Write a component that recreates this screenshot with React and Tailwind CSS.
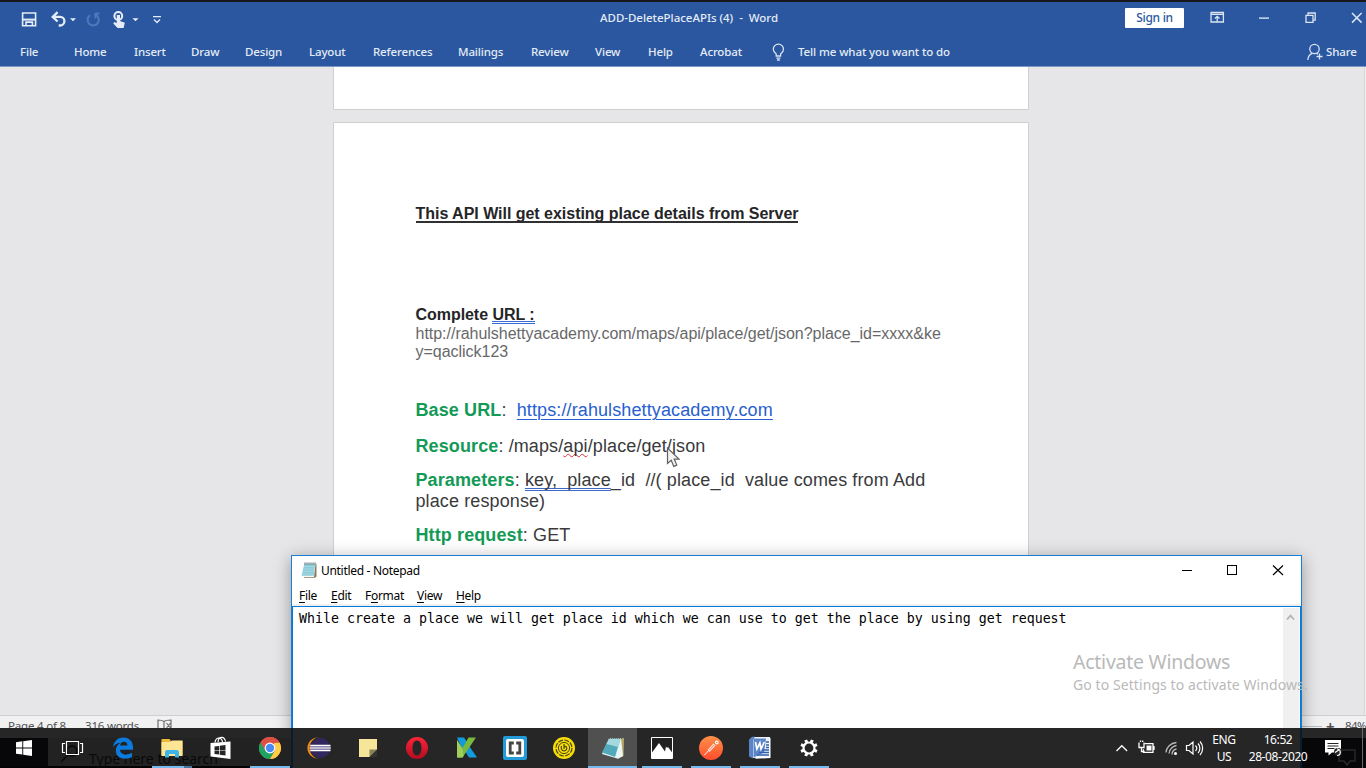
import React from "react";

const menu = [
  ["File", "w-[54px]"],
  ["Home", "w-[60px]"],
  ["Insert", "w-[57px]"],
  ["Draw", "w-[54px]"],
  ["Design", "w-[64px]"],
  ["Layout", "w-[64px]"],
  ["References", "w-[85px]"],
  ["Mailings", "w-[73px]"],
  ["Review", "w-[64px]"],
  ["View", "w-[53px]"],
  ["Help", "w-[52px]"],
  ["Acrobat", "w-[72px]"],
];

function QuickAccess() {
  return (
    <svg className="block h-[28px] w-[180px]" viewBox="0 0 180 28" fill="none">
      <g stroke="#e6edf8" strokeWidth="1.6" transform="translate(0 2.2)">
        <path d="M22.6 8.8h13v12.8h-13z" />
        <path d="M23 15.4h12.4" strokeWidth="2" />
        <path d="M26 21.5v-3.600h6.400v3.600" />
      </g>
      <path d="M52.500 14.300h7.600a4 4 0 0 1 0 8.600h-1.400M57.600 9.600l-4.900 4.700 4.900 4.600" stroke="#e6edf8" strokeWidth="2.300" transform="translate(0 0.600)" />
      <path d="M70 16.300h6l-3 3z" fill="#e6edf8" />
      <path d="M95.800 10.600a5.600 5.600 0 1 1-5.200.6M96 9v5.400M96 9.600h4" stroke="#5079bb" strokeWidth="2" transform="translate(-0.600 2)" />
      <circle cx="118.300" cy="14" r="3.900" stroke="#e6edf8" strokeWidth="2" />
      <path d="M116.800 13v8l-2.600-1-.9 1.600 4.300 4.400h6l1.200-5.200-4.800-1.800v-6z" fill="#e6edf8" />
      <path d="M132.500 16.300h6l-3 3zM153 14h8v1.300h-8z" fill="#e6edf8" />
      <path d="M154 17.500l3 3 3-3" stroke="#e6edf8" strokeWidth="1.300" />
    </svg>
  );
}

function WordHeader() {
  return (
    <header className="h-[67px] w-full border-b border-t-2 border-b-[#7d97c4] border-t-[#17181c] bg-[#2a579f] font-['Noto_Sans','Open_Sans',sans-serif] text-[12px] font-medium text-[#e4ebf6]">
      <div className="flex h-[31px] items-center">
        <div className="w-[600px] pb-[4px]">
          <QuickAccess />
        </div>
        <div className="w-[525px] whitespace-pre text-[11.5px] tracking-[-0.020px]">ADD-DeletePlaceAPIs (4)  -  Word</div>
        <div className="flex h-[20px] w-[59px] items-center justify-center rounded-[1px] bg-white text-[12px] tracking-[-0.3px] text-[#2a579f]">Sign in</div>
        <svg className="block h-[30px] w-[182px]" viewBox="1184 2 182 30" fill="none" stroke="#d9e4f4" strokeWidth="1.300">
          <path d="M1211 11.500h12.400v9.500h-12.400zM1211 13.400h12.400M1217.200 20.500v-5M1214.900 17.500l2.300-2.200 2.300 2.200" />
          <path d="M1259 17.100h10" strokeWidth="1.400" />
          <path d="M1306 14.300h7v7h-7zM1308 14v-2h7.200v7.200h-2" />
          <path d="M1352 12l9.600 9.600M1361.600 12l-9.600 9.600" strokeWidth="1.500" />
        </svg>
      </div>
      <nav className="flex h-[33px] items-center pl-5 pt-[4px] text-[11.5px] tracking-[-0.150px]">
        {menu.map(([label, w]) => (
          <span key={label} className={w + " shrink-0"}>{label}</span>
        ))}
        <svg className="block h-[18px] w-[26px] shrink-0" viewBox="0 0 26 18" fill="none" stroke="#d9e4f4" strokeWidth="1.300">
          <path d="M4.200 13v-2C2.600 9.500 1.300 8.400 1.300 6.200a5.100 5.100 0 0 1 10.200 0c0 2.200-1.300 3.300-2.900 4.800v2zM4.400 15.200h4M5 17h2.800" />
        </svg>
        <span className="w-[509px] shrink-0 tracking-[-0.100px]">Tell me what you want to do</span>
        <svg className="block h-[18px] w-[19px] shrink-0" viewBox="0 0 19 18" fill="none" stroke="#d9e4f4" strokeWidth="1.300">
          <circle cx="7.500" cy="6" r="4.700" />
          <path d="M.8 17c.2-3.600 1.800-5.600 4.400-6.600M9.800 10.200l1.200 1M12.500 10.500v6M9.500 13.500h6" />
        </svg>
        <span>Share</span>
      </nav>
    </header>
  );
}

function Green({ children }) {
  return <b className="text-[#139a56]">{children}</b>;
}

function DocPage() {
  return (
    <article className="mx-auto mt-[12px] h-[594px] w-[696px] border border-[#d0d0d2] bg-white pl-[81.5px] pt-[81px] font-['Liberation_Sans',Arial,sans-serif] text-[#3a3a3c]">
      <h1 className="h-[101px] text-[16px] font-bold leading-[20px] tracking-[-0.025px] text-[#252527]">
        <span className="inline-block h-[19px] whitespace-nowrap border-b-2 border-[#303032]">This API Will get existing place details from Server</span>
      </h1>
      <h2 className="h-[20px] text-[16px] font-bold leading-[20px] tracking-[-0.050px] text-[#252527]">
        Complete <span className="inline-block h-[19px] border-b-[3px] border-double border-[#3b6bd6]">URL :</span>
      </h2>
      <p className="whitespace-nowrap text-[16px] leading-[18px] tracking-[-0.020px] text-[#68686a]">
        http://rahulshettyacademy.com/maps/api/place/get/json?place_id=xxxx&amp;ke<br />y=qaclick123
      </p>
      <div className="mt-[39px] whitespace-pre text-[18px] leading-[21px] tracking-[0.110px]">
        <p className="h-[36px]"><Green>Base URL</Green>:  <span className="underline decoration-[#2860cf] decoration-1 underline-offset-[3px] text-[#2860cf]">https://rahulshettyacademy.com</span></p>
        <p className="h-[34px]"><Green>Resource</Green>: /maps/<span className="underline decoration-[#dc3030] decoration-wavy decoration-[1.200px] underline-offset-1 [text-decoration-skip-ink:none]">api</span>/place/get/json</p>
        <p className="h-[55px]"><Green>Parameters</Green>: <span className="underline decoration-double decoration-[#3c69c9] decoration-1 underline-offset-2 [text-decoration-skip-ink:none]">key,  place</span>_id  //( place_id  value comes from Add{"\n"}place response)</p>
        <p><Green>Http request</Green>: GET</p>
      </div>
    </article>
  );
}

function WordWindow() {
  return (
    <section className="flex h-[768px] flex-col bg-[#e6e6e8]">
      <WordHeader />
      <div className="flex h-[648px] overflow-hidden">
        <div className="w-[333px]" />
        <div className="w-[696px]">
          <div className="h-[43px] border border-t-0 border-[#d0d0d2] bg-white" />
          <DocPage />
        </div>
        <div className="flex flex-1 justify-end">
          <div className="w-[2px] border-l border-[#d8d8da] bg-[#efeff0]" />
        </div>
      </div>
      <footer className="flex h-[23px] items-start border-t border-[#cfcfd1] bg-[#f1f1f2] pl-[8px] font-['Noto_Sans','Open_Sans',sans-serif] text-[11.5px] leading-[20px] tracking-[-0.2px] text-[#505052]">
        <span className="w-[77px]">Page 4 of 8</span>
        <span className="w-[72px]">316 words</span>
        <svg className="mt-[3px] block h-[13px] w-[16px]" viewBox="0 0 16 13" fill="none" stroke="#707072" strokeWidth="1.200">
          <path d="M7 2.500C5 1 3 1 1 1v10c2 0 4 0 6 1.500zM7 2.500C9 1 11 1 14 1v10c-2 0-5 0-7 1.500M9.500 4l4 5M13.500 4l-4 5" />
        </svg>
        <div className="flex flex-1 justify-end">
          <div className="mt-[10px] h-px w-[30px] bg-[#bcbcbe]" />
          <span className="ml-1 w-[19px] text-[15px] font-bold">+</span>
          <span className="w-[21px] overflow-hidden whitespace-nowrap tracking-[-0.6px]">84%</span>
        </div>
      </footer>
      <div className="flex h-[30px] bg-black" />
    </section>
  );
}

function NotepadIcon({ className }) {
  return (
    <svg className={className} viewBox="0 0 16 16">
      <path d="M4 2h11.500v12.500L14 15.800H3z" fill="#8b7b5a" />
      <path d="M3.300 2h11.200L13 15H.7z" fill="#f4fafb" />
      <path d="M3.300 2h10.800l-1.400 11.800H.6z" fill="#8ccbd9" />
      <path d="M3 4.500h10.700M2.700 7h10.700M2 9.500h11M1.500 12h11.400" stroke="#a8dce6" strokeWidth=".8" />
      <path d="M4 .5v2M6 .5v2M8 .5v2M10 .5v2M12 .5v2M14 .5v2" stroke="#53606a" strokeWidth="1" />
    </svg>
  );
}

function Notepad() {
  const items = [["F", "ile", "", "w-[32px]"], ["E", "dit", "", "w-[34px]"], ["o", "rmat", "F", "w-[52px]"], ["V", "iew", "", "w-[39px]"], ["H", "elp", "", "w-[40px]"]];
  return (
    <section className="absolute left-[291px] top-[555px] h-[213px] w-[1011px] border border-b-0 border-[#1a7fd4] bg-white font-['Noto_Sans','Open_Sans',sans-serif] text-[12px] text-black shadow-[0_3px_16px_rgba(0,0,0,0.35)]">
      <div className="flex h-[29px] items-center pl-[9px]">
        <NotepadIcon className="-mt-[2px] block h-[16px] w-[16px]" />
        <span className="ml-[4px] flex-1 tracking-[-0.3px]">Untitled - Notepad</span>
        <svg className="block h-[29px] w-[121px]" viewBox="1180 556 121 29" fill="none" stroke="#000" shapeRendering="crispEdges">
          <path d="M1182 570.500h10M1227.500 565.500h9v9h-9z" />
          <path d="M1273 565.500l10 9.500M1283 565.500l-10 9.500" strokeWidth="1.200" shapeRendering="auto" />
        </svg>
      </div>
      <div className="flex h-[21px] items-center border-b-2 border-[#f0f0f0] pl-[7px] pt-[2px] tracking-[-0.3px]">
        {items.map(([u, rest, pre, w]) => (
          <span key={rest} className={w}>{pre}<span className="underline underline-offset-2">{u}</span>{rest}</span>
        ))}
      </div>
      <div className="flex h-[163px] border-x border-t border-[#0078d7]">
        <div className="flex-1 whitespace-pre pl-[6px] pt-[4px] font-['DejaVu_Sans_Mono',monospace] text-[13.29px] leading-[16px]">While create a place we will get place id which we can use to get the place by using get request</div>
        <div className="mr-[1px] mt-[1px] w-[16px] bg-[#f0f0f0]">
          <svg className="block h-[17px] w-[16px]" viewBox="0 0 16 17" fill="none" stroke="#b2b2b2" strokeWidth="1.800"><path d="M4 11.500l3.500-4 3.500 4" /></svg>
        </div>
      </div>
    </section>
  );
}

const icons = {
  task: (
    <svg className="h-6 w-6" viewBox="0 0 24 24" fill="none" stroke="#fff" strokeWidth="1.200">
      <path d="M5.500 5.500h12v13h-12zM4 7.500H1.500v9H4M19 7.500h2.500v9H19" />
    </svg>
  ),
  edge: (
    <svg className="h-6 w-6" viewBox="0 0 24 24">
      <path fill="#0a7bdc" d="M2 11C3 4.500 7.500 1.500 12.500 1.500c6.200 0 9.500 4.500 9.500 9.700v2.600H9c.1 3.200 2.900 4.700 6 4.700 2.200 0 4.200-.6 6-1.700v4.200c-2 1.100-4.300 1.700-7 1.700-5.500 0-9.200-3.200-9.200-8.200 0-3.400 1.800-6.100 4.700-7.700C5.700 7.200 3.600 8.700 2 11zm7.100-1.400h7.300c0-2.400-1.200-3.900-3.500-3.900-2.100 0-3.500 1.700-3.800 3.900z" />
    </svg>
  ),
  folder: (
    <svg className="h-6 w-6" viewBox="0 0 24 24">
      <path fill="#efb93b" d="M1.500 3h8l1.500 2h11.500v14h-21z" />
      <path fill="#ffe694" d="M1.500 6h9l1.500-1.500h10.500v15.500h-21z" />
      <path fill="#3db5e8" d="M5 21.500v-6l1.500-1.500h11L19 15.500v6h-4V18H9v3.500z" />
    </svg>
  ),
  store: (
    <svg className="h-6 w-6" viewBox="0 0 24 24" fill="none">
      <path fill="#fff" d="M1.500 7l20-1.500V23L1.500 20.500z" />
      <path stroke="#fff" strokeWidth="1.200" d="M6 6.500C6.500 3 8 2 10 2s3 1 3.500 4M9 6c.3-3.500 1.800-4.700 3.800-4.700S16 2.500 16.500 5.500" />
      <path fill="#262626" d="M5.500 10.500l4.500-.6v4H5.500zm5.200-.7l5.800-.8v4.900h-5.800zM5.500 14.600H10v4l-4.500-.5zm5.200 0h5.800v4.800l-5.800-.7z" />
    </svg>
  ),
  chrome: (
    <svg className="h-6 w-6" viewBox="0 0 24 24">
      <circle cx="12" cy="12" r="11" fill="#dd5144" />
      <path d="M2.470 6.500A11 11 0 0 0 12 23l4.800-8.200L12 12 7.200 14.700z" fill="#1da462" />
      <path d="M21.530 6.500A11 11 0 0 1 12 23l4.800-8.200L16 7z" fill="#ffcd46" />
      <path d="M2.470 6.500A11 11 0 0 1 21.530 6.500L12 7z" fill="#dd5144" />
      <circle cx="12" cy="12" r="5.400" fill="#fff" />
      <circle cx="12" cy="12" r="4.200" fill="#4a8af4" />
    </svg>
  ),
  eclipse: (
    <svg className="h-6 w-6" viewBox="0 0 24 24">
      <circle cx="11" cy="12" r="10.600" fill="#f18b1d" />
      <circle cx="13.600" cy="12" r="11" fill="#262626" />
      <circle cx="13.300" cy="12" r="10" fill="#33275f" />
      <path d="M3.200 9.500h20.300M2.700 12h21M3.200 14.500h20.300" stroke="#fff" strokeWidth="1.500" />
      <path d="M3 10.700h20.500M3 13.300h20.500" stroke="#9b95b5" strokeWidth="1.100" />
    </svg>
  ),
  sticky: (
    <svg className="h-6 w-6" viewBox="0 0 24 24">
      <path fill="#f5e69a" d="M3 3h18v10.500L13.500 21H3z" />
      <path fill="#8a8259" d="M13.500 13.500H21L13.500 21z" />
      <path fill="#36342c" d="M21 13.500V21h-7.500z" />
    </svg>
  ),
  opera: (
    <svg className="h-6 w-6" viewBox="0 0 24 24">
      <defs><linearGradient id="op" x2="0" y2="1"><stop stopColor="#ff2438" /><stop offset="1" stopColor="#b50b20" /></linearGradient></defs>
      <path fill="url(#op)" fillRule="evenodd" d="M12 1a11 11 0 1 0 0 22 11 11 0 0 0 0-22zm0 3.500c3 0 4.500 3.400 4.500 7.500s-1.500 7.500-4.500 7.500-4.500-3.400-4.500-7.500S9 4.500 12 4.500z" />
    </svg>
  ),
  katalon: (
    <svg className="h-6 w-6" viewBox="0 0 24 24">
      <path fill="#129bdd" d="M3 1.500h7l4 6-5 7z" />
      <path fill="#129bdd" d="M14.500 9l8.500 12.500h-8L11 15z" />
      <path fill="#79b93d" d="M3 4V21.500h5.500L22 1.500h-7.500L8.500 12z" />
      <path fill="#a0ce5c" d="M3 4l5.500 9 1 7-1 1.500H3z" />
    </svg>
  ),
  brackets: (
    <svg className="h-6 w-6" viewBox="0 0 24 24">
      <rect width="24" height="24" rx="2" fill="#239bd9" />
      <rect x="3" y="3" width="18" height="18" rx="2" fill="#fff" />
      <path d="M10.800 7H7.200v10h3.600M13.200 7h3.600v10h-3.600" fill="none" stroke="#454545" strokeWidth="2.800" />
    </svg>
  ),
  seal: (
    <svg className="h-6 w-6" viewBox="0 0 24 24" fill="none">
      <circle cx="12" cy="12" r="11" fill="#f8dc0a" />
      <circle cx="12" cy="12" r="8" stroke="#4c4919" strokeWidth="1.200" strokeDasharray="5 1.280" />
      <circle cx="12" cy="12" r="5.600" stroke="#4c4919" strokeWidth="1" />
      <path d="M9.500 10c-1 3 .5 4.800 2.500 4.800s3.500-1.800 2.500-3.600-2.500-.6-2.500.8M12 8v5" stroke="#4c4919" strokeWidth="1.200" />
    </svg>
  ),
  notepad: (
    <svg className="h-6 w-6" viewBox="0 0 24 24">
      <path d="M19 2.500l4-.5-.5 18-6 2.700z" fill="#bba663" />
      <path d="M8 2.500h12L22 20l-5 2.800L1 18z" fill="#e8f5f7" />
      <path d="M8 3h11.500L14 21 1 16.500z" fill="#52a9b9" />
      <path d="M8 3h11.500l-2.500 8L5.500 8z" fill="#a4d9df" />
      <path d="M8 2.500h13" stroke="#697a7d" strokeDasharray="1 1" />
    </svg>
  ),
  photo: (
    <svg className="h-6 w-6" viewBox="0 0 24 24">
      <path d="M1.500 1.500h21v21h-21z" fill="#202020" stroke="#fff" />
      <path d="M2 16.500L9 7l6 8.500 1-5 1 1.500 1-1 4.500 6V22H2z" fill="#fff" />
    </svg>
  ),
  postman: (
    <svg className="h-6 w-6" viewBox="0 0 24 24" fill="none">
      <defs><linearGradient id="pm" x2="0" y2="1"><stop stopColor="#ff9149" /><stop offset="1" stopColor="#ff4c2c" /></linearGradient></defs>
      <circle cx="12" cy="12" r="12" fill="url(#pm)" />
      <path d="M5.500 19l7-7.500" stroke="#fff" />
      <path d="M9.500 15l6-6.500" stroke="#ffe9df" strokeWidth="2.800" />
      <path d="M10 14.500l5-5.500" stroke="#ed7149" strokeWidth=".8" />
      <circle cx="17.800" cy="6.500" r="1.300" stroke="#fff" strokeWidth="1.200" />
    </svg>
  ),
  word: (
    <svg className="h-6 w-6" viewBox="0 0 24 24">
      <path d="M4 1h18v20L5 22z" fill="#edf2fa" />
      <path d="M22.500 2v20l-15 .8v-2H21V2z" fill="#fff" />
      <path d="M1 3.500L4 .8h3L5 4v18.500L1 20.500z" fill="#5b83c7" />
      <path d="M5.500 2.500H18l-2 14-10.500 5z" fill="#2b61b7" opacity=".75" />
      <path d="M14 14h7M11 16.500h10M9 19h12M18 6h3M18 9h3M18 11.500h3" stroke="#3160ab" strokeWidth="1.400" />
      <path d="M7.500 6l1.400 7 3-6 1.100 6 3.300-7" stroke="#fff" strokeWidth="1.700" fill="none" />
    </svg>
  ),
  gear: (
    <svg className="h-6 w-6" viewBox="0 0 24 24" fill="none" stroke="#fff">
      <circle cx="12" cy="12" r="5.500" strokeWidth="2.200" />
      <path d="M9.700 6.500L8.700 4M14.300 6.500l1-2.500M17.500 9.700l2.500-1M17.500 14.300l2.500 1M14.300 17.500l1 2.500M9.700 17.500l-1 2.500M6.500 14.300l-2.500 1M6.500 9.700L4 8.700" strokeWidth="3" />
    </svg>
  ),
};

const tasks = [
  ["edge", false], ["folder", true], ["store", false], ["chrome", true], ["eclipse", false], ["sticky", false],
  ["opera", false], ["katalon", false], ["brackets", false], ["seal", false], ["notepad", true],
  ["photo", true], ["postman", true], ["word", true], ["gear", true],
];

function Taskbar() {
  return (
    <footer className="absolute left-0 top-[728px] flex h-[40px] w-[1366px] overflow-hidden bg-[#262626] font-['Noto_Sans','Open_Sans',sans-serif] text-white">
      <div className="absolute left-[48px] top-[10px] h-[28px] w-[243px] bg-[#222222]" />
      <div className="absolute left-0 top-[10px] h-[30px] w-[48px] bg-[#070709]" />
      <div className="absolute left-0 top-[38px] h-[2px] w-[291px] bg-[#030303]" />
      <svg className="absolute left-[60px] top-[16px] h-[20px] w-[20px]" viewBox="0 0 20 20" fill="none" stroke="#080808" strokeWidth="1.500"><circle cx="12" cy="7" r="5" /><path d="M8 11l-7 7" /></svg>
      <div className="absolute left-[89px] top-[21px] h-[19px] whitespace-nowrap text-[14px] leading-[20px] text-[#090909]">Type here to search</div>
      <div className="absolute left-[291px] top-0 h-[40px] w-[2px] bg-[#071c2d]" />
      <div className="absolute left-[1302px] top-[10px] h-[30px] w-[64px] bg-[#070709]" />
      <div className="absolute left-[1300px] top-0 h-[40px] w-[2px] bg-[#071c2d]" />
      <svg className="absolute left-[1338px] top-[21px] h-[18px] w-[18px]" viewBox="0 0 18 18" fill="none" stroke="#29292b" strokeWidth="1.500"><path d="M1 1h16v11h-5l-3 4-3-4H1z" /></svg>
      <div className="relative flex h-full w-full items-stretch">
        <div className="flex w-[48px] items-center justify-center">
          <svg className="block h-[16px] w-[16px]" viewBox="0 0 16 16" fill="#fff"><path d="M0 2.200L6.300 1.300v6.200H0zM7.200 1.200L16 0v7.500H7.200zM0 8.400h6.300v6.200L0 13.700zM7.200 8.400H16v7.500L7.200 14.700z" /></svg>
        </div>
        <div className="flex w-[49px] items-center justify-center">{icons.task}</div>
        {tasks.map(([name, open]) => (
          <div key={name} className={"relative left-[1px] flex w-[49px] items-center justify-center" + (name === "notepad" ? " bg-[#505050]" : "")}>
            {icons[name]}
            {open && <div className={"absolute bottom-0 h-[2px] bg-[#76b9ed] " + (name === "notepad" ? "inset-x-0" : "left-[5px] right-[4px]")} />}
            {name === "folder" && <div className="absolute bottom-0 right-[4px] h-[2px] w-[8px] bg-[#49779c]" />}
          </div>
        ))}
        <div className="flex flex-1 items-center justify-end">
          <svg className="block h-[40px] w-[90px]" viewBox="1116 728 90 40" fill="none" stroke="#fff" strokeWidth="1.300">
            <path d="M1117.500 751l5.300-5.300 5.300 5.300" />
            <path d="M1145.500 743.700h8.500v8.600h-9.500v-3M1155 746v4" />
            <path d="M1147.500 745.500h5v5h-5z" fill="#fff" stroke="none" />
            <path d="M1140 742.500v5h5v-5M1141.500 742v-1.500M1143.700 742v-1.500M1142.500 748v3.500h3" />
            <path d="M1167 752.500c.3-5 4.500-9.500 10.500-10M1170 753.500c.3-4 3.500-7.500 7.500-8M1173 754.500c.2-3 2-5 4.500-5.500" stroke="#bbb" />
            <circle cx="1176.500" cy="753.500" r="1.500" fill="#fff" stroke="none" />
            <path d="M1187.500 745.500h2.500l4-3.500v12l-4-3.500h-2.500zM1196.500 745.500c1.500 1.700 1.500 4 0 5.500M1199 743.500c2.500 2.500 2.500 7 0 9.500M1201 741.500c3.500 3.500 3.500 10 0 13.500" strokeWidth="1.200" />
          </svg>
          <div className="flex w-[38px] flex-col items-center text-[12px] leading-[17px] tracking-[-0.4px]"><span>ENG</span><span>US</span></div>
          <div className="ml-[1px] flex w-[68px] flex-col items-center whitespace-nowrap text-[12px] leading-[17px] tracking-[-0.4px]"><span>16:52</span><span>28-08-2020</span></div>
          <svg className="ml-[12px] block h-[20px] w-[20px]" viewBox="0 0 20 20" fill="none">
            <path fill="#fff" d="M1 2h16v12.500H8l-3.500 3v-3H1z" />
            <path stroke="#262626" strokeWidth="1.200" d="M3.500 5.500h11M3.500 8h11M3.500 10.500h7" />
            <circle cx="14" cy="14" r="4" fill="#262626" /><path stroke="#fff" strokeWidth="1.200" d="M13 17.500a3.200 3.200 0 1 0 0-6.500M11 14.500l4.500-3" />
          </svg>
          <div className="ml-[18px] mr-[3px] h-full w-px bg-[#69696a]" />
        </div>
      </div>
    </footer>
  );
}

export default function App() {
  return (
    <main className="relative h-[768px] w-[1366px] overflow-hidden">
      <WordWindow />
      <svg className="absolute left-[666px] top-[447px] h-[22px] w-[14px]" viewBox="0 0 14 22"><path d="M1.500 1v15.500l3.700-3.300 2.600 6.200 3-1.300-2.600-6h4.800z" fill="#f4f4f4" stroke="#606064" strokeWidth="1.200" /></svg>
      <Notepad />
      <div className="absolute left-[1073px] top-[649px] whitespace-nowrap font-['Noto_Sans','Open_Sans',sans-serif] text-[#b9b9b9]">
        <div className="text-[19.500px] leading-[26px] tracking-[-0.250px]">Activate Windows</div>
        <div className="text-[14px] leading-[20px] tracking-[0.080px]">Go to Settings to activate Windows.</div>
      </div>
      <Taskbar />
    </main>
  );
}
